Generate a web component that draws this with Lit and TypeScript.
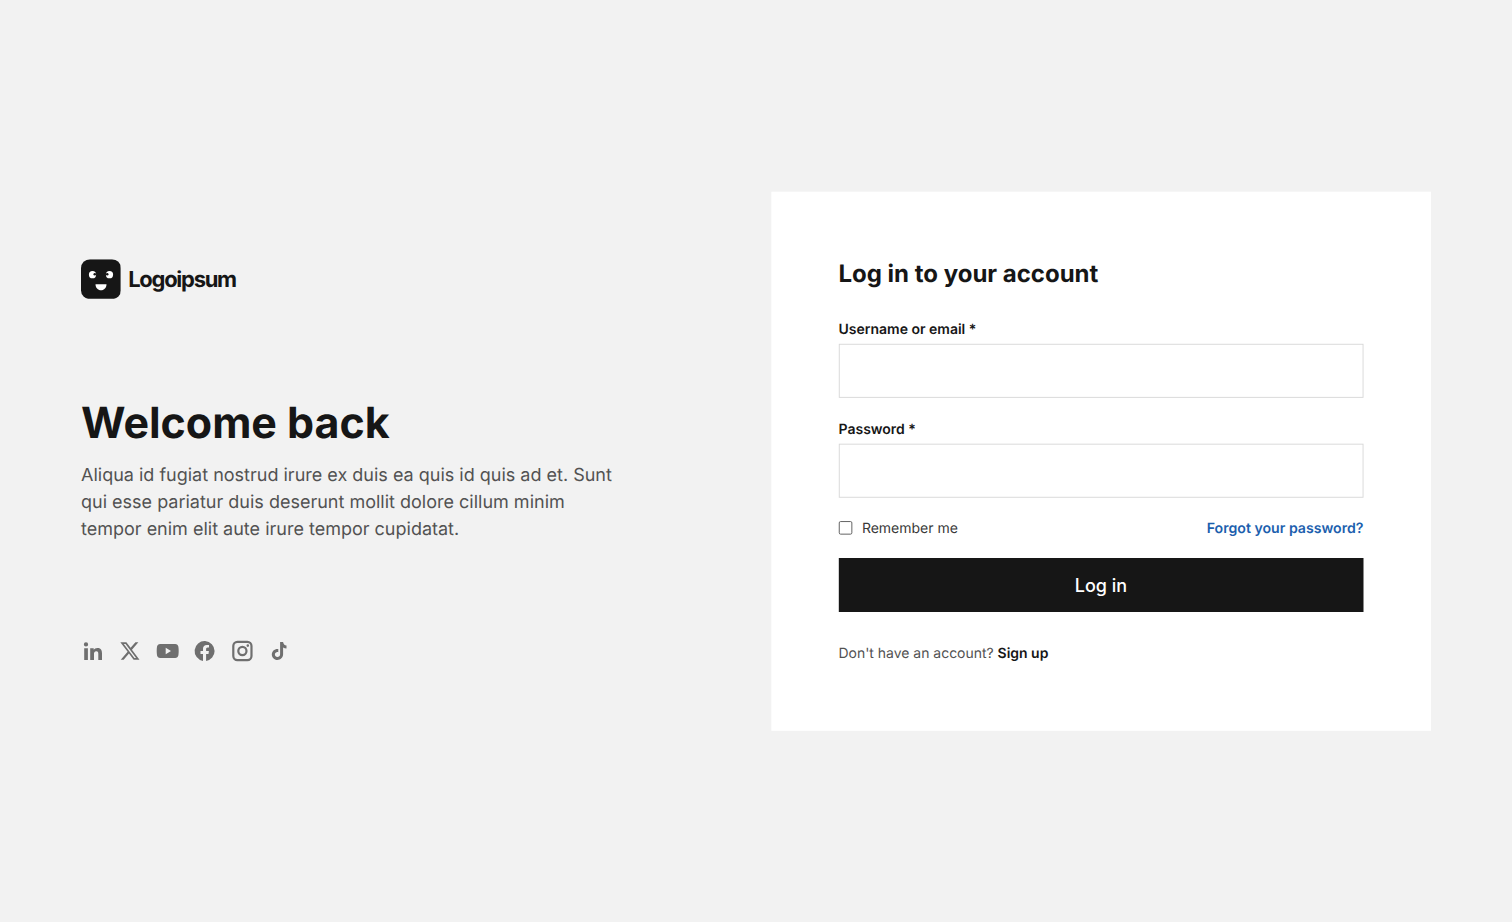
import { LitElement, html, css } from "lit";
import { customElement } from "lit/decorators.js";

@customElement("app-root")
export class AppRoot extends LitElement {
  static styles = css`
    :host { display: block; width: 1512px; height: 922px; overflow: hidden; font-family: Inter, "Liberation Sans", sans-serif; color: #161616; background: #f2f2f2; }
    * { box-sizing: border-box; }
    .page { width: 1680px; height: 1024.44px; transform: scale(0.9); transform-origin: 0 0; background: #f2f2f2; display: flex; align-items: center; justify-content: space-between; padding: 0 90px; text-rendering: geometricPrecision; }
    .left { width: 600px; display: flex; flex-direction: column; }
    .logo { display: flex; align-items: center; gap: 8px; height: 44.44px; }
    .logo svg { display: block; width: 44.44px; height: 44.44px; }
    .logo span { font-size: 24.4px; font-weight: 700; letter-spacing: -1.4px; color: #161616; }
    h1 { margin: 109px 0 0; font-size: 47.7px; line-height: 58px; font-weight: 700; color: #161616; }
    .lead { margin: 13px 0 0; font-size: 20px; line-height: 30px; color: #525252; }
    .social { display: flex; gap: 14.8px; margin-top: 108px; color: #6f6f6f; }
    .social svg { width: 26.67px; height: 26.67px; display: block; fill: currentColor; }
    .card { width: 733.33px; background: #fff; padding: 75px 75px 74px; }
    h2 { margin: 0; font-size: 26.67px; line-height: 32px; font-weight: 700; color: #161616; }
    .field { display: flex; flex-direction: column; gap: 3px; }
    .field label { font-size: 15.55px; line-height: 26px; font-weight: 600; color: #161616; }
    .f1 { margin-top: 33px; }
    .f2 { margin-top: 22px; }
    .box { height: 60px; width: 100%; border: 1.5px solid #d6d6d6; background: #fff; display: block; padding: 0 12px; font: inherit; outline: none; }
    .row { display: flex; justify-content: space-between; align-items: center; margin-top: 22px; height: 24px; }
    .check { display: flex; align-items: center; gap: 11px; font-size: 15.55px; color: #393939; }
    .cb { width: 15px; height: 15px; border: 1.5px solid #525252; border-radius: 2px; background: #fff; margin: 0; appearance: none; display: block; }
    a.forgot { font-size: 15.7px; font-weight: 600; color: #1c5fae; text-decoration: none; }
    button { display: block; width: 100%; height: 60px; margin-top: 21px; padding: 2px 0 0; background: #161616; color: #fff; border: 0; font: 500 20px Inter, "Liberation Sans", sans-serif; }
    .signup { margin: 34px 0 0; font-size: 15.5px; line-height: 24px; color: #525252; }
    .signup a { font-weight: 600; color: #161616; text-decoration: none; }
  `;

  render() {
    return html`
      <div class="page">
        <section class="left">
          <div class="logo">
            <svg viewBox="0 0 40 40">
              <rect width="40" height="40" rx="9" fill="#161616"></rect>
              <circle cx="11.5" cy="15.500" r="3.600" fill="#fff"></circle>
              <circle cx="28.500" cy="15.500" r="3.600" fill="#fff"></circle>
              <circle cx="13.800" cy="15" r="1.300" fill="#161616"></circle>
              <circle cx="26.200" cy="15" r="1.300" fill="#161616"></circle>
              <path d="M14.500 25h11c0 3.500-2.400 6-5.500 6s-5.500-2.500-5.500-6z" fill="#fff"></path>
            </svg>
            <span>Logoipsum</span>
          </div>
          <h1>Welcome back</h1>
          <p class="lead">Aliqua id fugiat nostrud irure ex duis ea quis id quis ad et. Sunt qui esse pariatur duis deserunt mollit dolore cillum minim tempor enim elit aute irure tempor cupidatat.</p>
          <div class="social">
            <svg viewBox="0 0 24 24"><path d="M3.200 9.200h3.700V21H3.200zM5 3.300a2.150 2.150 0 1 1 0 4.300 2.150 2.150 0 0 1 0-4.300zM9.200 9.200h3.500v1.600c.6-1 1.900-1.900 3.800-1.900 3.800 0 4.500 2.500 4.500 5.700V21h-3.700v-5.600c0-1.400 0-3.200-2-3.200s-2.300 1.500-2.300 3.100V21H9.200z"></path></svg>
            <svg viewBox="-1.500 -1.500 27 27"><path d="M18.244 2.250h3.308l-7.227 8.260 8.502 11.240H16.170l-5.214-6.817L4.990 21.750H1.680l7.730-8.835L1.254 2.250H8.080l4.713 6.231zm-1.161 17.520h1.833L7.084 4.126H5.117z"></path></svg>
            <svg viewBox="0 0 24 24"><path fill-rule="evenodd" d="M4.500 5h15c1.700 0 3 1.200 3.200 2.800.2 1.400.3 2.800.3 4.200s-.1 2.800-.3 4.200c-.2 1.600-1.500 2.800-3.200 2.800h-15c-1.700 0-3-1.200-3.200-2.800C1.100 14.800 1 13.400 1 12s.1-2.800.3-4.200C1.500 6.200 2.800 5 4.500 5zM10 8.800v6.400l5.300-3.200z"></path></svg>
            <svg viewBox="0 0 24 24"><path d="M22 12a10 10 0 1 0-11.600 9.900v-7H7.900V12h2.500V9.800c0-2.500 1.500-3.900 3.800-3.900 1.100 0 2.200.2 2.200.2v2.500h-1.300c-1.200 0-1.600.8-1.600 1.600V12h2.800l-.4 2.900h-2.400v7A10 10 0 0 0 22 12z"></path></svg>
            <svg viewBox="0 0 24 24"><path fill-rule="evenodd" d="M7 1.800h10A5.200 5.200 0 0 1 22.200 7v10a5.200 5.200 0 0 1-5.200 5.200H7A5.200 5.200 0 0 1 1.800 17V7A5.200 5.200 0 0 1 7 1.800zm0 2.200A3 3 0 0 0 4 7v10a3 3 0 0 0 3 3h10a3 3 0 0 0 3-3V7a3 3 0 0 0-3-3zM12 6.800a5.200 5.200 0 1 1 0 10.400 5.200 5.200 0 0 1 0-10.400zm0 2.200a3 3 0 1 0 0 6 3 3 0 0 0 0-6zM17.400 5.300a1.300 1.300 0 1 1 0 2.600 1.300 1.300 0 0 1 0-2.600z"></path></svg>
            <svg viewBox="0 0 24 24"><path d="M12.800 3h3c.2 2 1.400 3.300 3.400 3.500v3c-1.300 0-2.400-.4-3.400-1.100v6.900c0 3.400-2.600 5.700-5.700 5.700-3.200 0-5.600-2.500-5.600-5.500 0-3.300 2.800-5.900 6.500-5.500v3.200c-1.700-.4-3.400.6-3.400 2.300 0 1.400 1.100 2.400 2.500 2.400 1.500 0 2.700-1 2.700-2.700z"></path></svg>
          </div>
        </section>
        <section class="card">
          <h2>Log in to your account</h2>
          <div class="field f1">
            <label>Username or email *</label>
            <input class="box" type="text" />
          </div>
          <div class="field f2">
            <label>Password *</label>
            <input class="box" type="password" />
          </div>
          <div class="row">
            <label class="check"><input class="cb" type="checkbox" /><span>Remember me</span></label>
            <a class="forgot" href="#">Forgot your password?</a>
          </div>
          <button>Log in</button>
          <p class="signup">Don't have an account? <a href="#">Sign up</a></p>
        </section>
      </div>
    `;
  }
}
